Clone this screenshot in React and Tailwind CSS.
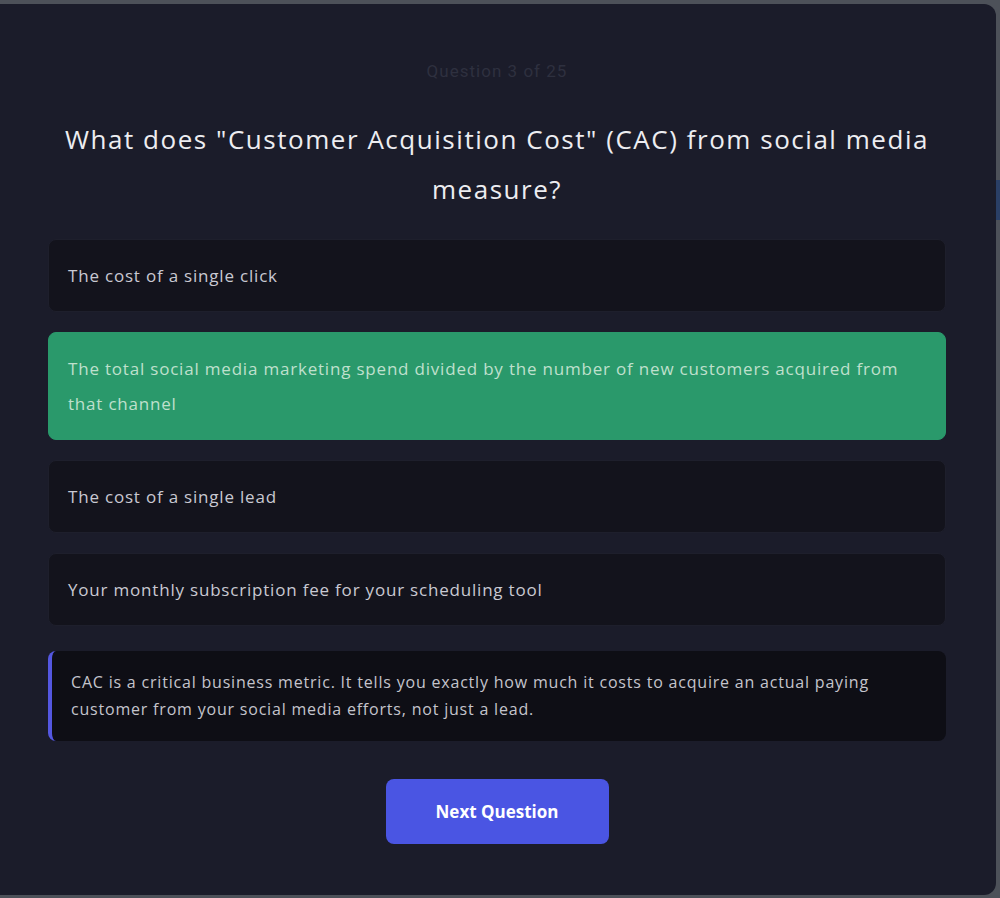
const options = [
  { text: "The cost of a single click", correct: false },
  {
    text: "The total social media marketing spend divided by the number of new customers acquired from that channel",
    correct: true,
  },
  { text: "The cost of a single lead", correct: false },
  { text: "Your monthly subscription fee for your scheduling tool", correct: false },
];

function App() {
  return (
    <div className="h-[898px] w-full overflow-hidden bg-[#4d5159] pt-[4px] flex">
      {/* Quiz card */}
      <div
        className="relative shrink-0 w-[996px] h-[891px] rounded-r-xl bg-[#1b1c2a] flex flex-col pl-[48px] pr-[50px] pt-[55px] tracking-[0.05em]"
        style={{ fontFamily: '"Open Sans", "Liberation Sans", sans-serif' }}
      >
        <p
          className="text-center text-[17px] leading-6 tracking-[0.06em] text-[#2e303f]"
          style={{ fontFamily: 'Roboto, "Liberation Sans", sans-serif' }}
        >
          Question 3 of 25
        </p>

        <h2 className="mt-[31px] px-[8px] text-center text-[26px] leading-[50px] font-medium tracking-[0.059em] text-[#ededf1]">
          What does "Customer Acquisition Cost" (CAC) from social media measure?
        </h2>

        <div className="mt-[25px] flex flex-col gap-5">
          {options.map((opt) => (
            <div
              key={opt.text}
              className={
                opt.correct
                  ? "rounded-lg border border-[#2a996b] bg-[#2a996b] px-[19px] py-[18px] text-[17px] leading-[35px] text-[#bfe0cd]"
                  : "rounded-lg border border-[#1e1f2c] bg-[#13131c] px-[19px] py-[17px] text-[17px] leading-[37px] text-[#c9c9d2]"
              }
            >
              {opt.text}
            </div>
          ))}
        </div>

        {/* Explanation */}
        <div className="mt-[25px] rounded-lg border-l-4 border-[#5457e0] bg-[#0e0e15] pl-[19px] pr-6 py-[18px] text-[16px] leading-[27px] text-[#c4c4cc]">
          CAC is a critical business metric. It tells you exactly how much it costs to acquire an actual paying
          customer from your social media efforts, not just a lead.
        </div>

        <button className="mt-[38px] self-center w-[223px] h-[65px] rounded-lg bg-[#4a55e3] text-[17px] font-bold tracking-normal text-white">
          Next Question
        </button>
      </div>
      <div className="mt-[176px] h-[40px] w-[4px] shrink-0 bg-[#2a3f66]" />
    </div>
  );
}

export default App;
